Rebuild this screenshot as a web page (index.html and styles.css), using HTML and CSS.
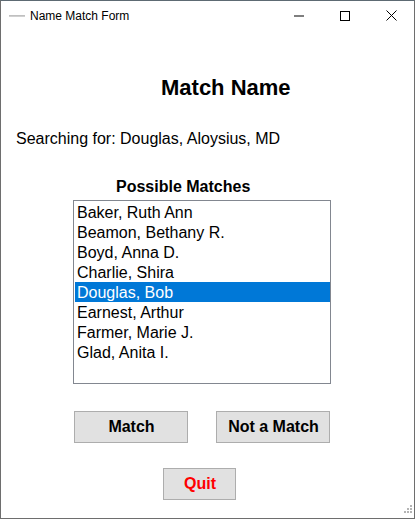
FILE: index.html
```html
<!DOCTYPE html>
<html lang="en">
<head>
<meta charset="utf-8">
<title>Name Match Form</title>
<link rel="stylesheet" href="styles.css">
</head>
<body>
<div class="window">
  <div class="titlebar">
    <span class="app-icon"></span>
    <span class="title">Name Match Form</span>
    <div class="controls">
      <span class="ctl">
        <svg width="10" height="10" viewBox="0 0 10 10"><rect x="0" y="4.5" width="10" height="1" fill="#000"/></svg>
      </span>
      <span class="ctl">
        <svg width="10" height="10" viewBox="0 0 10 10"><rect x="0.5" y="0.5" width="9" height="9" fill="none" stroke="#000" stroke-width="1"/></svg>
      </span>
      <span class="ctl">
        <svg width="11" height="11" viewBox="0 0 11 11"><path d="M0.5 0.5 L10.5 10.5 M10.5 0.5 L0.5 10.5" stroke="#000" stroke-width="1" fill="none"/></svg>
      </span>
    </div>
  </div>
  <div class="content">
    <h1 class="heading">Match Name</h1>
    <p class="searching">Searching for: Douglas, Aloysius, MD</p>
    <p class="list-label">Possible Matches</p>
    <ul class="listbox">
      <li class="item">Baker, Ruth Ann</li>
      <li class="item">Beamon, Bethany R.</li>
      <li class="item">Boyd, Anna D.</li>
      <li class="item">Charlie, Shira</li>
      <li class="item selected">Douglas, Bob</li>
      <li class="item">Earnest, Arthur</li>
      <li class="item">Farmer, Marie J.</li>
      <li class="item">Glad, Anita I.</li>
    </ul>
    <div class="button-row">
      <button class="btn">Match</button>
      <button class="btn">Not a Match</button>
    </div>
    <div class="quit-row">
      <button class="btn btn-quit">Quit</button>
    </div>
    <div class="grip">
      <svg width="12" height="12" viewBox="0 0 12 12">
        <rect x="9" y="0" width="2" height="2" fill="#b4b4b4"/>
        <rect x="6" y="3" width="2" height="2" fill="#b4b4b4"/>
        <rect x="9" y="3" width="2" height="2" fill="#b4b4b4"/>
        <rect x="3" y="6" width="2" height="2" fill="#b4b4b4"/>
        <rect x="6" y="6" width="2" height="2" fill="#b4b4b4"/>
        <rect x="9" y="6" width="2" height="2" fill="#b4b4b4"/>
      </svg>
    </div>
  </div>
</div>
</body>
</html>
```

FILE: styles.css
```css
* { box-sizing: border-box; }

html, body {
  margin: 0;
  padding: 0;
  background: #ffffff;
}

.window {
  width: 415px;
  height: 519px;
  display: flex;
  flex-direction: column;
  background: #ffffff;
  border-top: 1px solid #5d6a73;
  border-left: 1px solid #6e6e6e;
  border-right: 1px solid #6e6e6e;
  border-bottom: 1px solid #6e6e6e;
  font-family: "Liberation Sans", Arial, sans-serif;
  color: #000;
}

.titlebar {
  height: 29px;
  display: flex;
  align-items: center;
  padding-left: 8px;
  flex: 0 0 auto;
}

.app-icon {
  width: 16px;
  height: 2px;
  background: linear-gradient(#b8b8b8, #d8d8d8);
  margin-right: 5px;
}

.title {
  font-size: 12px;
  color: #000;
}

.controls {
  margin-left: auto;
  display: flex;
  height: 29px;
}

.ctl {
  width: 46px;
  height: 29px;
  display: flex;
  align-items: center;
  justify-content: center;
}

.ctl svg { display: block; }

.content {
  flex: 1 1 auto;
  display: flex;
  flex-direction: column;
  align-items: flex-start;
}

.heading {
  margin: 45px 0 0 160px;
  font-size: 22px;
  line-height: 25px;
  font-weight: bold;
}

.searching {
  margin: 30px 0 0 15px;
  font-size: 16px;
  line-height: 18px;
}

.list-label {
  margin: 30px 0 0 115px;
  font-size: 16px;
  line-height: 18px;
  font-weight: bold;
}

.listbox {
  list-style: none;
  margin: 4px 0 0 72px;
  padding: 1px 0 1px 1px;
  width: 258px;
  height: 184px;
  border: 1px solid #828790;
}

.item {
  height: 20px;
  line-height: 20px;
  font-size: 16px;
  padding: 1px 0 0 2px;
  white-space: nowrap;
}

.item.selected {
  background: #0078d7;
  color: #ffffff;
}

.button-row {
  display: flex;
  gap: 28px;
  margin: 27px 0 0 73px;
}

.btn {
  width: 114px;
  height: 32px;
  margin: 0;
  padding: 0 0 0 1px;
  background: #e1e1e1;
  border: 1px solid #adadad;
  border-radius: 0;
  font-family: "Liberation Sans", Arial, sans-serif;
  font-size: 16px;
  font-weight: bold;
  color: #000;
}

.quit-row {
  margin: 25px 0 0 162px;
}

.btn-quit {
  width: 73px;
  color: #ff0000;
}

.grip {
  margin-top: auto;
  align-self: flex-end;
  margin-right: 1px;
  margin-bottom: 1px;
  width: 12px;
  height: 12px;
}

.grip svg { display: block; }
```
